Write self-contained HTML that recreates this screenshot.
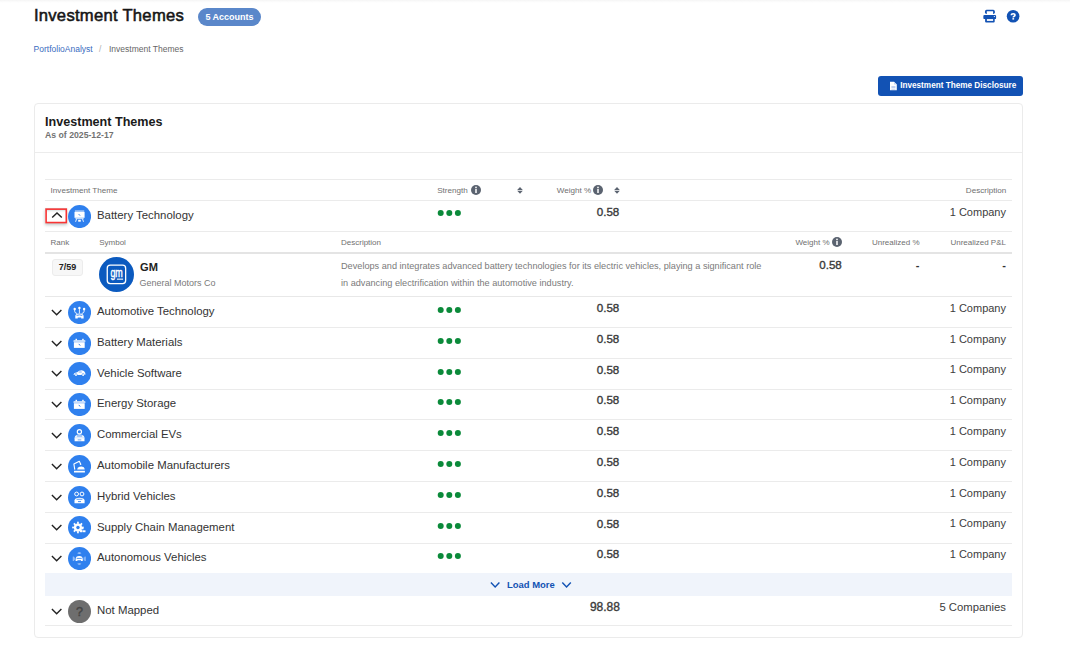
<!DOCTYPE html>
<html><head><meta charset="utf-8"><title>Investment Themes</title>
<style>
html,body{margin:0;padding:0;background:#fff;width:1070px;height:647px;overflow:hidden;position:relative}
.a{position:absolute;display:block}
.t{position:absolute;white-space:nowrap;line-height:20px;font-family:"Liberation Sans", sans-serif}
</style></head><body>
<div class="a" style="left:0.00px;top:0.00px;width:1070.00px;height:3.00px;background:linear-gradient(#f5f5f5,#fdfdfd 70%,#fff)"></div>
<div class="t" style="left:33.90px;top:6.15px;font-size:16.6px;font-weight:400;color:#151515;-webkit-text-stroke:0.55px #151515;letter-spacing:0.28px">Investment Themes</div>
<div class="a" style="left:198.20px;top:7.50px;width:62.60px;height:18.20px;background:#5a87ca;border-radius:10px"></div>
<div class="t" style="left:29.50px;width:400px;text-align:center;top:6.98px;font-size:9px;font-weight:700;color:#fff;">5 Accounts</div>
<svg class="a" style="left:982.00px;top:9.00px" width="16" height="15" viewBox="0 0 16 15"><rect x="2.96" y="0.85" width="9.9" height="4.1" rx="1.6" fill="#1252b4"/><rect x="4.8" y="2.25" width="6.3" height="3" fill="#fff"/>
<rect x="1.35" y="5.9" width="12.75" height="4.2" rx="1.2" fill="#1252b4"/>
<rect x="3.1" y="9" width="9.6" height="4.6" rx="1.1" fill="#1252b4"/><rect x="4.9" y="10.1" width="6.2" height="1.8" fill="#fff"/>
<circle cx="12.35" cy="7.5" r="0.6" fill="#fff"/></svg>
<svg class="a" style="left:1006.00px;top:9.00px" width="14" height="14" viewBox="0 0 14 14"><circle cx="7.1" cy="7.2" r="6.3" fill="#1252b4"/>
<path d="M5.4 6.3 Q5.4 4.75 7.2 4.75 Q9.0 4.75 9.0 6.0 Q9.0 6.8 8.1 7.3 Q7.3 7.7 7.3 8.6" fill="none" stroke="#fff" stroke-width="1.65"/><rect x="6.4" y="9.1" width="1.75" height="1.5" fill="#fff"/></svg>
<div class="t" style="left:33.60px;top:38.55px;font-size:8.5px;font-weight:400;color:#3a6cc0;">PortfolioAnalyst</div>
<div class="t" style="left:99.00px;top:38.55px;font-size:8.5px;font-weight:400;color:#b0b0b0;">/</div>
<div class="t" style="left:109.00px;top:38.55px;font-size:8.5px;font-weight:400;color:#666;">Investment Themes</div>
<div class="a" style="left:878.20px;top:76.00px;width:145.10px;height:19.50px;background:#1252b4;border-radius:3px"></div>
<svg class="a" style="left:889.00px;top:80.50px" width="9" height="10" viewBox="0 0 9 10"><path d="M1 0.8 H5 L7.8 3.6 V9.2 H1 Z" fill="#fff"/><path d="M5 0.8 V3.6 H7.8" fill="#c9d8f2"/>
<rect x="2.4" y="5" width="4" height="0.6" fill="#9bb5e6"/><rect x="2.4" y="6.4" width="4" height="0.6" fill="#9bb5e6"/><rect x="2.4" y="7.8" width="4" height="0.6" fill="#9bb5e6"/></svg>
<div class="t" style="left:900.20px;top:76.16px;font-size:8.2px;font-weight:700;color:#fff;">Investment Theme Disclosure</div>
<div class="a" style="left:34.00px;top:103.00px;width:989.00px;height:534.50px;border:1px solid #ebebeb;border-radius:4px;box-sizing:border-box"></div>
<div class="t" style="left:45.00px;top:111.53px;font-size:12.6px;font-weight:700;color:#1a1a1a;">Investment Themes</div>
<div class="t" style="left:45.00px;top:125.49px;font-size:8.7px;font-weight:700;color:#727272;">As of 2025-12-17</div>
<div class="a" style="left:35.00px;top:152.30px;width:987.00px;height:1.00px;background:#ececec"></div>
<div class="a" style="left:45.00px;top:179.30px;width:967.00px;height:1.00px;background:#ebebeb"></div>
<div class="t" style="left:50.60px;top:181.09px;font-size:8.1px;font-weight:400;color:#707070;">Investment Theme</div>
<div class="t" style="left:437.20px;top:181.09px;font-size:8.1px;font-weight:400;color:#707070;">Strength</div>
<div class="t" style="left:556.70px;top:181.09px;font-size:8.1px;font-weight:400;color:#707070;">Weight %</div>
<div class="t" style="right:63.70px;top:181.09px;font-size:8.1px;font-weight:400;color:#707070;">Description</div>
<svg class="a" style="left:470.50px;top:184.90px" width="10" height="10" viewBox="0 0 10 10"><circle cx="5" cy="5" r="5" fill="#5b6370"/>
<rect x="4.25" y="4" width="1.5" height="4" fill="#fff"/><circle cx="5" cy="2.4" r="0.85" fill="#fff"/></svg>
<svg class="a" style="left:517.10px;top:185.50px" width="6" height="9" viewBox="0 0 6 9"><path d="M0.2 4.0 L3 0.9 L5.8 4.0 Z M0.2 4.7 L3 7.8 L5.8 4.7 Z" fill="#5b6370"/></svg>
<svg class="a" style="left:593.20px;top:184.90px" width="10" height="10" viewBox="0 0 10 10"><circle cx="5" cy="5" r="5" fill="#5b6370"/>
<rect x="4.25" y="4" width="1.5" height="4" fill="#fff"/><circle cx="5" cy="2.4" r="0.85" fill="#fff"/></svg>
<svg class="a" style="left:613.60px;top:185.50px" width="6" height="9" viewBox="0 0 6 9"><path d="M0.2 4.0 L3 0.9 L5.8 4.0 Z M0.2 4.7 L3 7.8 L5.8 4.7 Z" fill="#5b6370"/></svg>
<div class="a" style="left:45.00px;top:200.00px;width:967.00px;height:1.00px;background:#ebebeb"></div>
<div class="a" style="left:45.40px;top:208.00px;width:21.70px;height:14.60px;box-sizing:border-box;box-shadow:0 2px 3px rgba(40,70,70,0.3), inset 0 3px 2px rgba(40,70,70,0.18)"></div>
<svg class="a" style="left:45.00px;top:207.60px" width="23" height="16" viewBox="0 0 23 16"><rect x="1.1" y="1.15" width="20.2" height="13.4" fill="none" stroke="#f83434" stroke-width="1.6"/></svg>
<svg class="a" style="left:51.00px;top:211.00px" width="12" height="8" viewBox="0 0 12 8"><path d="M1.2 6.6 L6 2 L10.8 6.6" fill="none" stroke="#222" stroke-width="1.4"/></svg>
<svg class="a" style="left:68.40px;top:204.65px" width="23.1" height="23.1" viewBox="0 0 23.1 23.1"><circle cx="11.55" cy="11.55" r="11.55" fill="#2f80ee"/><g fill="#fff"><rect x="6.5" y="6.9" width="10.1" height="5.9"/><rect x="6.9" y="5.6" width="9.3" height="0.9"/><rect x="7.4" y="13.3" width="8.3" height="0.8"/><rect x="10.2" y="14.8" width="2.6" height="1.9"/></g><g stroke="#fff" stroke-width="0.9"><path d="M8.6 13.8 L7.6 16.8 M14.5 13.8 L15.5 16.8"/></g><path d="M10.6 9.0 L12.1 10.7" stroke="#2f80ee" stroke-width="0.9"/></svg>
<div class="t" style="left:97.00px;top:204.95px;font-size:11.4px;font-weight:400;color:#333;">Battery Technology</div>
<svg class="a" style="left:436.00px;top:209.30px" width="26" height="8" viewBox="0 0 26 8"><circle cx="4.70" cy="4" r="3.0" fill="#0b8a3a"/><circle cx="13.30" cy="4" r="3.0" fill="#0b8a3a"/><circle cx="21.90" cy="4" r="3.0" fill="#0b8a3a"/></svg>
<div class="t" style="right:450.70px;top:202.08px;font-size:11.6px;font-weight:400;color:#3a3a3a;-webkit-text-stroke:0.35px #3a3a3a">0.58</div>
<div class="t" style="right:64.00px;top:201.79px;font-size:11px;font-weight:400;color:#3d3d3d;">1 Company</div>
<div class="a" style="left:45.00px;top:231.00px;width:967.00px;height:1.00px;background:#ebebeb"></div>
<div class="t" style="left:50.60px;top:232.73px;font-size:8px;font-weight:400;color:#707070;">Rank</div>
<div class="t" style="left:99.20px;top:232.73px;font-size:8px;font-weight:400;color:#707070;">Symbol</div>
<div class="t" style="left:341.00px;top:232.73px;font-size:8px;font-weight:400;color:#707070;">Description</div>
<div class="t" style="right:240.50px;top:232.73px;font-size:8px;font-weight:400;color:#707070;">Weight %</div>
<svg class="a" style="left:831.60px;top:237.30px" width="10" height="10" viewBox="0 0 10 10"><circle cx="5" cy="5" r="5" fill="#5b6370"/>
<rect x="4.25" y="4" width="1.5" height="4" fill="#fff"/><circle cx="5" cy="2.4" r="0.85" fill="#fff"/></svg>
<div class="t" style="right:150.50px;top:232.73px;font-size:8px;font-weight:400;color:#707070;">Unrealized %</div>
<div class="t" style="right:64.00px;top:232.73px;font-size:8px;font-weight:400;color:#707070;">Unrealized P&amp;L</div>
<div class="a" style="left:45.00px;top:252.30px;width:967.00px;height:1.50px;background:#e4e4e4"></div>
<div class="a" style="left:52.00px;top:259.30px;width:31.00px;height:16.30px;background:#f7f7f7;border:1px solid #ececec;border-radius:3px;box-sizing:border-box"></div>
<div class="t" style="left:-132.40px;width:400px;text-align:center;top:256.78px;font-size:9px;font-weight:700;color:#222;">7/59</div>
<svg class="a" style="left:98.80px;top:257.30px" width="35" height="35" viewBox="0 0 35 35"><circle cx="17.5" cy="17.5" r="17.5" fill="#0b5abf"/><rect x="8.25" y="8.15" width="18.4" height="18.4" rx="3" fill="none" stroke="#fff" stroke-width="1.3"/>
<text transform="translate(17.6 20.0) scale(0.66 1)" font-family="Liberation Sans" font-size="13.5" font-weight="400" fill="#fff" stroke="#fff" stroke-width="0.5" text-anchor="middle">gm</text>
<rect x="17.9" y="21.6" width="6.2" height="1.1" fill="#fff"/></svg>
<div class="t" style="left:140.00px;top:257.45px;font-size:11.1px;font-weight:700;color:#222;">GM</div>
<div class="t" style="left:139.60px;top:273.08px;font-size:9px;font-weight:400;color:#7a7a7a;">General Motors Co</div>
<div class="t" style="left:341.00px;top:256.12px;font-size:9.17px;font-weight:400;color:#7a7a7a;">Develops and integrates advanced battery technologies for its electric vehicles, playing a significant role</div>
<div class="t" style="left:341.00px;top:272.82px;font-size:9.17px;font-weight:400;color:#7a7a7a;">in advancing electrification within the automotive industry.</div>
<div class="t" style="right:228.20px;top:255.28px;font-size:11.6px;font-weight:400;color:#3a3a3a;-webkit-text-stroke:0.35px #3a3a3a">0.58</div>
<div class="t" style="right:150.50px;top:255.19px;font-size:11px;font-weight:700;color:#333;">-</div>
<div class="t" style="right:64.00px;top:255.19px;font-size:11px;font-weight:700;color:#333;">-</div>
<div class="a" style="left:45.00px;top:295.60px;width:967.00px;height:1.00px;background:#e8e8e8"></div>
<svg class="a" style="left:51.00px;top:308.80px" width="12" height="8" viewBox="0 0 12 8"><path d="M0.9 1.1 L5.65 5.7 L10.4 1.1" fill="none" stroke="#222" stroke-width="1.4"/></svg>
<svg class="a" style="left:68.40px;top:300.85px" width="23.1" height="23.1" viewBox="0 0 23.1 23.1"><circle cx="11.55" cy="11.55" r="11.55" fill="#2f80ee"/><g fill="#fff"><circle cx="6.7" cy="8" r="1.2"/><circle cx="11.4" cy="6.9" r="1.2"/><circle cx="16.1" cy="8" r="1.2"/></g><g fill="none" stroke="#fff" stroke-width="0.9"><path d="M6.7 8 V10.3 Q6.7 12 9.2 12.6"/><path d="M11.4 6.9 V12.4"/><path d="M16.1 8 V10.3 Q16.1 12 13.6 12.6"/></g><path fill="#fff" d="M7.3 17.5 V15 Q7.3 12.4 11.4 12.4 Q15.6 12.4 15.6 15 V17.5 H13.2 V16.4 H9.7 V17.5 Z"/><path d="M8.6 14.4 Q11.4 13.4 14.3 14.4" stroke="#2f80ee" stroke-width="0.9" fill="none"/></svg>
<div class="t" style="left:97.00px;top:301.05px;font-size:11.4px;font-weight:400;color:#333;">Automotive Technology</div>
<svg class="a" style="left:436.00px;top:305.90px" width="26" height="8" viewBox="0 0 26 8"><circle cx="4.70" cy="4" r="3.0" fill="#0b8a3a"/><circle cx="13.30" cy="4" r="3.0" fill="#0b8a3a"/><circle cx="21.90" cy="4" r="3.0" fill="#0b8a3a"/></svg>
<div class="t" style="right:450.70px;top:297.98px;font-size:11.6px;font-weight:400;color:#3a3a3a;-webkit-text-stroke:0.35px #3a3a3a">0.58</div>
<div class="t" style="right:64.00px;top:297.89px;font-size:11px;font-weight:400;color:#3d3d3d;">1 Company</div>
<div class="a" style="left:45.00px;top:327.00px;width:967.00px;height:1.00px;background:#ebebeb"></div>
<svg class="a" style="left:51.00px;top:339.60px" width="12" height="8" viewBox="0 0 12 8"><path d="M0.9 1.1 L5.65 5.7 L10.4 1.1" fill="none" stroke="#222" stroke-width="1.4"/></svg>
<svg class="a" style="left:68.40px;top:331.65px" width="23.1" height="23.1" viewBox="0 0 23.1 23.1"><circle cx="11.55" cy="11.55" r="11.55" fill="#2f80ee"/><g fill="#fff"><rect x="5.6" y="8.3" width="11.7" height="1.5"/><rect x="5.9" y="10.2" width="10.8" height="5.7"/><rect x="7.5" y="6.8" width="1.5" height="1.6"/><rect x="14.2" y="6.8" width="1.5" height="1.6"/></g><rect x="5.6" y="9.6" width="11.7" height="0.5" fill="#a9c9f8"/><path d="M10.8 11.9 L12.2 13.6" stroke="#2f80ee" stroke-width="1"/></svg>
<div class="t" style="left:97.00px;top:331.85px;font-size:11.4px;font-weight:400;color:#333;">Battery Materials</div>
<svg class="a" style="left:436.00px;top:336.70px" width="26" height="8" viewBox="0 0 26 8"><circle cx="4.70" cy="4" r="3.0" fill="#0b8a3a"/><circle cx="13.30" cy="4" r="3.0" fill="#0b8a3a"/><circle cx="21.90" cy="4" r="3.0" fill="#0b8a3a"/></svg>
<div class="t" style="right:450.70px;top:328.78px;font-size:11.6px;font-weight:400;color:#3a3a3a;-webkit-text-stroke:0.35px #3a3a3a">0.58</div>
<div class="t" style="right:64.00px;top:328.69px;font-size:11px;font-weight:400;color:#3d3d3d;">1 Company</div>
<div class="a" style="left:45.00px;top:357.80px;width:967.00px;height:1.00px;background:#ebebeb"></div>
<svg class="a" style="left:51.00px;top:370.40px" width="12" height="8" viewBox="0 0 12 8"><path d="M0.9 1.1 L5.65 5.7 L10.4 1.1" fill="none" stroke="#222" stroke-width="1.4"/></svg>
<svg class="a" style="left:68.40px;top:362.45px" width="23.1" height="23.1" viewBox="0 0 23.1 23.1"><circle cx="11.55" cy="11.55" r="11.55" fill="#2f80ee"/><path fill="#fff" d="M5.6 12.9 Q5.5 11.2 7.4 10.8 L9.2 10.3 Q11 8.3 13.7 8.3 Q16.5 8.4 17.3 10.9 Q17.6 12.5 17.1 12.9 Z"/><circle cx="8.0" cy="13.0" r="1.45" fill="#2f80ee"/><circle cx="15.1" cy="13.0" r="1.45" fill="#2f80ee"/><circle cx="8.0" cy="13.0" r="0.95" fill="#fff"/><circle cx="15.1" cy="13.0" r="0.95" fill="#fff"/><rect x="10.6" y="9.2" width="3.2" height="1.6" rx="0.4" fill="#a9c9f8"/></svg>
<div class="t" style="left:97.00px;top:362.65px;font-size:11.4px;font-weight:400;color:#333;">Vehicle Software</div>
<svg class="a" style="left:436.00px;top:367.50px" width="26" height="8" viewBox="0 0 26 8"><circle cx="4.70" cy="4" r="3.0" fill="#0b8a3a"/><circle cx="13.30" cy="4" r="3.0" fill="#0b8a3a"/><circle cx="21.90" cy="4" r="3.0" fill="#0b8a3a"/></svg>
<div class="t" style="right:450.70px;top:359.58px;font-size:11.6px;font-weight:400;color:#3a3a3a;-webkit-text-stroke:0.35px #3a3a3a">0.58</div>
<div class="t" style="right:64.00px;top:359.49px;font-size:11px;font-weight:400;color:#3d3d3d;">1 Company</div>
<div class="a" style="left:45.00px;top:388.60px;width:967.00px;height:1.00px;background:#ebebeb"></div>
<svg class="a" style="left:51.00px;top:401.20px" width="12" height="8" viewBox="0 0 12 8"><path d="M0.9 1.1 L5.65 5.7 L10.4 1.1" fill="none" stroke="#222" stroke-width="1.4"/></svg>
<svg class="a" style="left:68.40px;top:393.25px" width="23.1" height="23.1" viewBox="0 0 23.1 23.1"><circle cx="11.55" cy="11.55" r="11.55" fill="#2f80ee"/><g fill="#fff"><rect x="5.6" y="8.3" width="11.7" height="1.5"/><rect x="5.9" y="10.2" width="10.8" height="5.7"/><rect x="7.5" y="6.8" width="1.5" height="1.6"/><rect x="14.2" y="6.8" width="1.5" height="1.6"/></g><rect x="5.6" y="9.6" width="11.7" height="0.5" fill="#a9c9f8"/><path d="M10.8 11.9 L12.2 13.6" stroke="#2f80ee" stroke-width="1"/></svg>
<div class="t" style="left:97.00px;top:393.45px;font-size:11.4px;font-weight:400;color:#333;">Energy Storage</div>
<svg class="a" style="left:436.00px;top:398.30px" width="26" height="8" viewBox="0 0 26 8"><circle cx="4.70" cy="4" r="3.0" fill="#0b8a3a"/><circle cx="13.30" cy="4" r="3.0" fill="#0b8a3a"/><circle cx="21.90" cy="4" r="3.0" fill="#0b8a3a"/></svg>
<div class="t" style="right:450.70px;top:390.38px;font-size:11.6px;font-weight:400;color:#3a3a3a;-webkit-text-stroke:0.35px #3a3a3a">0.58</div>
<div class="t" style="right:64.00px;top:390.29px;font-size:11px;font-weight:400;color:#3d3d3d;">1 Company</div>
<div class="a" style="left:45.00px;top:419.40px;width:967.00px;height:1.00px;background:#ebebeb"></div>
<svg class="a" style="left:51.00px;top:432.00px" width="12" height="8" viewBox="0 0 12 8"><path d="M0.9 1.1 L5.65 5.7 L10.4 1.1" fill="none" stroke="#222" stroke-width="1.4"/></svg>
<svg class="a" style="left:68.40px;top:424.05px" width="23.1" height="23.1" viewBox="0 0 23.1 23.1"><circle cx="11.55" cy="11.55" r="11.55" fill="#2f80ee"/><circle cx="11.4" cy="7.8" r="2.1" fill="none" stroke="#fff" stroke-width="1.2"/><path fill="#fff" d="M6.6 17.3 V14.2 Q6.6 10.4 11.5 10.4 Q16.5 10.4 16.5 14.2 V17.3 Z"/><path d="M8.7 12.0 H14.3" stroke="#2f80ee" stroke-width="0.9"/><rect x="6.6" y="13.6" width="9.9" height="0.6" fill="#a9c9f8"/><rect x="9.7" y="15" width="3.6" height="1.6" fill="#a9c9f8"/></svg>
<div class="t" style="left:97.00px;top:424.25px;font-size:11.4px;font-weight:400;color:#333;">Commercial EVs</div>
<svg class="a" style="left:436.00px;top:429.10px" width="26" height="8" viewBox="0 0 26 8"><circle cx="4.70" cy="4" r="3.0" fill="#0b8a3a"/><circle cx="13.30" cy="4" r="3.0" fill="#0b8a3a"/><circle cx="21.90" cy="4" r="3.0" fill="#0b8a3a"/></svg>
<div class="t" style="right:450.70px;top:421.18px;font-size:11.6px;font-weight:400;color:#3a3a3a;-webkit-text-stroke:0.35px #3a3a3a">0.58</div>
<div class="t" style="right:64.00px;top:421.09px;font-size:11px;font-weight:400;color:#3d3d3d;">1 Company</div>
<div class="a" style="left:45.00px;top:450.20px;width:967.00px;height:1.00px;background:#ebebeb"></div>
<svg class="a" style="left:51.00px;top:462.80px" width="12" height="8" viewBox="0 0 12 8"><path d="M0.9 1.1 L5.65 5.7 L10.4 1.1" fill="none" stroke="#222" stroke-width="1.4"/></svg>
<svg class="a" style="left:68.40px;top:454.85px" width="23.1" height="23.1" viewBox="0 0 23.1 23.1"><circle cx="11.55" cy="11.55" r="11.55" fill="#2f80ee"/><g fill="none" stroke="#fff" stroke-width="1.1" stroke-linejoin="round"><path d="M6.8 14.6 L5.9 9.1 L11.3 6.3 L12.6 9"/></g><circle cx="12.6" cy="9.3" r="0.8" fill="#fff"/><path fill="#fff" d="M9.2 14.6 Q9.2 12.3 11.5 11.8 L13.8 11.6 Q16.4 12 16.6 13.8 V14.6 Z"/><rect x="6" y="15.8" width="10.9" height="1.7" fill="#fff"/></svg>
<div class="t" style="left:97.00px;top:455.05px;font-size:11.4px;font-weight:400;color:#333;">Automobile Manufacturers</div>
<svg class="a" style="left:436.00px;top:459.90px" width="26" height="8" viewBox="0 0 26 8"><circle cx="4.70" cy="4" r="3.0" fill="#0b8a3a"/><circle cx="13.30" cy="4" r="3.0" fill="#0b8a3a"/><circle cx="21.90" cy="4" r="3.0" fill="#0b8a3a"/></svg>
<div class="t" style="right:450.70px;top:451.98px;font-size:11.6px;font-weight:400;color:#3a3a3a;-webkit-text-stroke:0.35px #3a3a3a">0.58</div>
<div class="t" style="right:64.00px;top:451.89px;font-size:11px;font-weight:400;color:#3d3d3d;">1 Company</div>
<div class="a" style="left:45.00px;top:481.00px;width:967.00px;height:1.00px;background:#ebebeb"></div>
<svg class="a" style="left:51.00px;top:493.60px" width="12" height="8" viewBox="0 0 12 8"><path d="M0.9 1.1 L5.65 5.7 L10.4 1.1" fill="none" stroke="#222" stroke-width="1.4"/></svg>
<svg class="a" style="left:68.40px;top:485.65px" width="23.1" height="23.1" viewBox="0 0 23.1 23.1"><circle cx="11.55" cy="11.55" r="11.55" fill="#2f80ee"/><g fill="none" stroke="#fff" stroke-width="1"><circle cx="8.6" cy="8" r="1.9"/><circle cx="14" cy="8" r="1.9"/></g><path fill="#fff" d="M6.5 17.3 V14.6 Q6.5 11.7 11.5 11.7 Q16.6 11.7 16.6 14.6 V17.3 Z"/><path d="M8.6 13.3 H14.4" stroke="#2f80ee" stroke-width="0.8"/><rect x="10" y="15.2" width="3" height="0.9" fill="#2f80ee"/></svg>
<div class="t" style="left:97.00px;top:485.85px;font-size:11.4px;font-weight:400;color:#333;">Hybrid Vehicles</div>
<svg class="a" style="left:436.00px;top:490.70px" width="26" height="8" viewBox="0 0 26 8"><circle cx="4.70" cy="4" r="3.0" fill="#0b8a3a"/><circle cx="13.30" cy="4" r="3.0" fill="#0b8a3a"/><circle cx="21.90" cy="4" r="3.0" fill="#0b8a3a"/></svg>
<div class="t" style="right:450.70px;top:482.78px;font-size:11.6px;font-weight:400;color:#3a3a3a;-webkit-text-stroke:0.35px #3a3a3a">0.58</div>
<div class="t" style="right:64.00px;top:482.69px;font-size:11px;font-weight:400;color:#3d3d3d;">1 Company</div>
<div class="a" style="left:45.00px;top:511.80px;width:967.00px;height:1.00px;background:#ebebeb"></div>
<svg class="a" style="left:51.00px;top:524.40px" width="12" height="8" viewBox="0 0 12 8"><path d="M0.9 1.1 L5.65 5.7 L10.4 1.1" fill="none" stroke="#222" stroke-width="1.4"/></svg>
<svg class="a" style="left:68.40px;top:516.45px" width="23.1" height="23.1" viewBox="0 0 23.1 23.1"><circle cx="11.55" cy="11.55" r="11.55" fill="#2f80ee"/><g fill="#fff"><circle cx="9.95" cy="11.5" r="4.1"/><rect x="9.1" y="5.7" width="1.7" height="2.2" transform="rotate(0 9.95 11.5)"/><rect x="9.1" y="5.7" width="1.7" height="2.2" transform="rotate(45 9.95 11.5)"/><rect x="9.1" y="5.7" width="1.7" height="2.2" transform="rotate(90 9.95 11.5)"/><rect x="9.1" y="5.7" width="1.7" height="2.2" transform="rotate(135 9.95 11.5)"/><rect x="9.1" y="5.7" width="1.7" height="2.2" transform="rotate(180 9.95 11.5)"/><rect x="9.1" y="5.7" width="1.7" height="2.2" transform="rotate(225 9.95 11.5)"/><rect x="9.1" y="5.7" width="1.7" height="2.2" transform="rotate(270 9.95 11.5)"/><rect x="9.1" y="5.7" width="1.7" height="2.2" transform="rotate(315 9.95 11.5)"/><rect x="13.4" y="12.0" width="2" height="1.3"/><rect x="11.9" y="14.3" width="2.6" height="1.9"/><rect x="14.9" y="14.3" width="2.6" height="1.9"/></g><circle cx="9.95" cy="11.5" r="1.7" fill="#2f80ee"/></svg>
<div class="t" style="left:97.00px;top:516.65px;font-size:11.4px;font-weight:400;color:#333;">Supply Chain Management</div>
<svg class="a" style="left:436.00px;top:521.50px" width="26" height="8" viewBox="0 0 26 8"><circle cx="4.70" cy="4" r="3.0" fill="#0b8a3a"/><circle cx="13.30" cy="4" r="3.0" fill="#0b8a3a"/><circle cx="21.90" cy="4" r="3.0" fill="#0b8a3a"/></svg>
<div class="t" style="right:450.70px;top:513.58px;font-size:11.6px;font-weight:400;color:#3a3a3a;-webkit-text-stroke:0.35px #3a3a3a">0.58</div>
<div class="t" style="right:64.00px;top:513.49px;font-size:11px;font-weight:400;color:#3d3d3d;">1 Company</div>
<div class="a" style="left:45.00px;top:542.60px;width:967.00px;height:1.00px;background:#ebebeb"></div>
<svg class="a" style="left:51.00px;top:555.20px" width="12" height="8" viewBox="0 0 12 8"><path d="M0.9 1.1 L5.65 5.7 L10.4 1.1" fill="none" stroke="#222" stroke-width="1.4"/></svg>
<svg class="a" style="left:68.40px;top:547.25px" width="23.1" height="23.1" viewBox="0 0 23.1 23.1"><circle cx="11.55" cy="11.55" r="11.55" fill="#2f80ee"/><path fill="#fff" d="M7.6 14.1 V12.4 Q7.6 9 11.2 9 Q14.8 9 14.8 12.4 V14.1 H13 V13.3 H9.4 V14.1 Z"/><path d="M8.7 11.4 H13.7" stroke="#2f80ee" stroke-width="0.8"/><g fill="#a9c9f8"><path d="M9.2 6.3 Q11.3 4.2 13.4 6.3 L11.3 6.9 Z"/><path d="M9.2 16.8 Q11.3 18.9 13.4 16.8 L11.3 16.2 Z"/><rect x="4.8" y="9.6" width="1" height="4.4"/><rect x="5.9" y="10.4" width="0.8" height="2.8"/><rect x="16.6" y="9.6" width="1" height="4.4"/><rect x="15.7" y="10.4" width="0.8" height="2.8"/></g></svg>
<div class="t" style="left:97.00px;top:547.45px;font-size:11.4px;font-weight:400;color:#333;">Autonomous Vehicles</div>
<svg class="a" style="left:436.00px;top:552.30px" width="26" height="8" viewBox="0 0 26 8"><circle cx="4.70" cy="4" r="3.0" fill="#0b8a3a"/><circle cx="13.30" cy="4" r="3.0" fill="#0b8a3a"/><circle cx="21.90" cy="4" r="3.0" fill="#0b8a3a"/></svg>
<div class="t" style="right:450.70px;top:544.38px;font-size:11.6px;font-weight:400;color:#3a3a3a;-webkit-text-stroke:0.35px #3a3a3a">0.58</div>
<div class="t" style="right:64.00px;top:544.29px;font-size:11px;font-weight:400;color:#3d3d3d;">1 Company</div>
<div class="a" style="left:45.00px;top:573.40px;width:967.00px;height:1.00px;background:#ebebeb"></div>
<div class="a" style="left:45.00px;top:573.20px;width:967.00px;height:22.40px;background:#f0f4fb"></div>
<svg class="a" style="left:489.00px;top:580.50px" width="13" height="8" viewBox="0 0 13 8"><path d="M1.9 1.6 L6.15 5.9 L10.4 1.6" fill="none" stroke="#1252b4" stroke-width="1.45"/></svg>
<div class="t" style="left:507.00px;top:575.13px;font-size:9.45px;font-weight:700;color:#1252b4;">Load More</div>
<svg class="a" style="left:560.00px;top:580.50px" width="13" height="8" viewBox="0 0 13 8"><path d="M2.3 1.6 L6.55 5.9 L10.8 1.6" fill="none" stroke="#1252b4" stroke-width="1.45"/></svg>
<svg class="a" style="left:51.00px;top:607.60px" width="12" height="8" viewBox="0 0 12 8"><path d="M0.9 1.1 L5.65 5.7 L10.4 1.1" fill="none" stroke="#222" stroke-width="1.4"/></svg>
<svg class="a" style="left:68.30px;top:599.60px" width="23" height="23" viewBox="0 0 23 23"><circle cx="11.5" cy="11.5" r="11.5" fill="#6e6e6e"/><text x="11.5" y="16.1" font-family="Liberation Sans" font-size="12.5" fill="#454545" stroke="#454545" stroke-width="0.45" text-anchor="middle">?</text></svg>
<div class="t" style="left:97.00px;top:599.55px;font-size:11.4px;font-weight:400;color:#333;">Not Mapped</div>
<div class="t" style="right:450.10px;top:596.84px;font-size:12.0px;font-weight:400;color:#3a3a3a;-webkit-text-stroke:0.35px #3a3a3a">98.88</div>
<div class="t" style="right:64.00px;top:596.78px;font-size:11.3px;font-weight:400;color:#3d3d3d;">5 Companies</div>
<div class="a" style="left:45.00px;top:625.20px;width:967.00px;height:1.00px;background:#ebebeb"></div>
</body></html>
